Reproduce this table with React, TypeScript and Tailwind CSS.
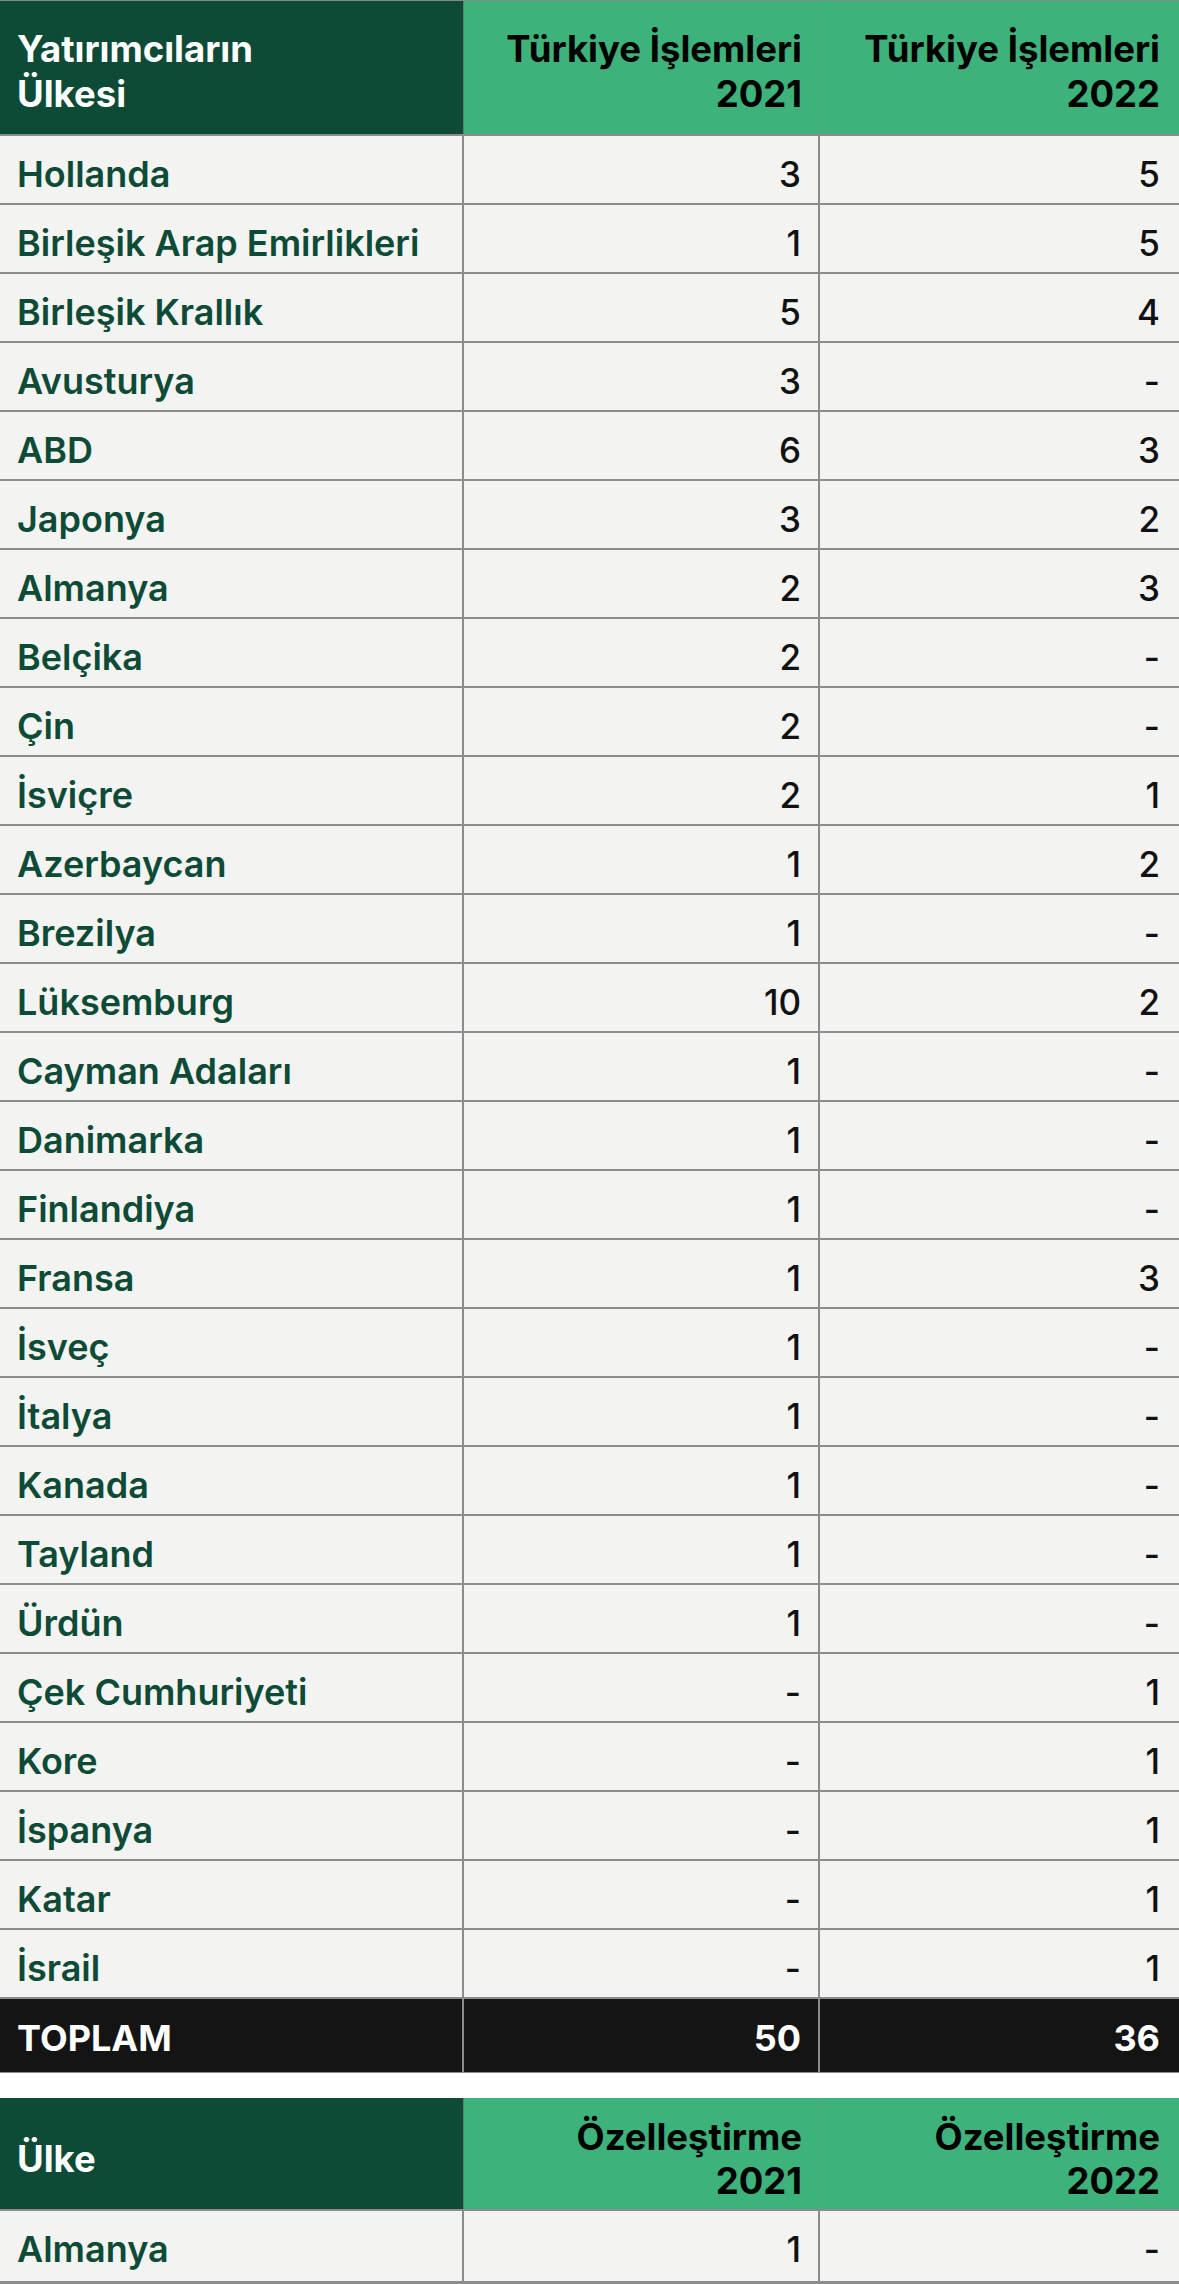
import React from 'react';

type Row = { country: string; y21: string; y22: string };

const rows: Row[] = [
  { country: 'Hollanda', y21: '3', y22: '5' },
  { country: 'Birleşik Arap Emirlikleri', y21: '1', y22: '5' },
  { country: 'Birleşik Krallık', y21: '5', y22: '4' },
  { country: 'Avusturya', y21: '3', y22: '-' },
  { country: 'ABD', y21: '6', y22: '3' },
  { country: 'Japonya', y21: '3', y22: '2' },
  { country: 'Almanya', y21: '2', y22: '3' },
  { country: 'Belçika', y21: '2', y22: '-' },
  { country: 'Çin', y21: '2', y22: '-' },
  { country: 'İsviçre', y21: '2', y22: '1' },
  { country: 'Azerbaycan', y21: '1', y22: '2' },
  { country: 'Brezilya', y21: '1', y22: '-' },
  { country: 'Lüksemburg', y21: '10', y22: '2' },
  { country: 'Cayman Adaları', y21: '1', y22: '-' },
  { country: 'Danimarka', y21: '1', y22: '-' },
  { country: 'Finlandiya', y21: '1', y22: '-' },
  { country: 'Fransa', y21: '1', y22: '3' },
  { country: 'İsveç', y21: '1', y22: '-' },
  { country: 'İtalya', y21: '1', y22: '-' },
  { country: 'Kanada', y21: '1', y22: '-' },
  { country: 'Tayland', y21: '1', y22: '-' },
  { country: 'Ürdün', y21: '1', y22: '-' },
  { country: 'Çek Cumhuriyeti', y21: '-', y22: '1' },
  { country: 'Kore', y21: '-', y22: '1' },
  { country: 'İspanya', y21: '-', y22: '1' },
  { country: 'Katar', y21: '-', y22: '1' },
  { country: 'İsrail', y21: '-', y22: '1' },
];

const grid = 'grid grid-cols-[464px_356px_1fr]';

const DataRow: React.FC<{ row: Row; last?: boolean }> = ({ row, last }) => (
  <div className={`${grid} bg-[#f3f3f1] border-[#8c8c8c] ${last ? 'h-[73px] border-b-[3px]' : 'h-[69px] border-b-2'}`}>
    <div className="border-r-2 border-[#8c8c8c] pl-[17px] pt-[18px] text-[36px] text-[#0d4b37] font-semibold">{row.country}</div>
    <div className="border-r-2 border-[#8c8c8c] pr-[17px] pt-[18px] text-right text-[#111111] font-medium">{row.y21}</div>
    <div className="pr-[19px] pt-[18px] text-right text-[#111111] font-medium">{row.y22}</div>
  </div>
);

export default function App() {
  return (
    <div className="w-[1179px] bg-white text-[35px] leading-[41px] font-['Inter','Liberation_Sans',sans-serif]">
      {/* yatırımcı ülkeleri */}
      <div className="border-t border-[#7d8c86]">
        <div className={`${grid} h-[135px] border-b-2 border-[#8c8c8c] font-bold text-[36.5px] leading-[45px]`}>
          <div className="bg-[#0d4b37] text-white pl-[17px] pt-[8px] flex items-center border-r border-[#5c7f71]">
            <span>Yatırımcıların<br />Ülkesi</span>
          </div>
          <div className="bg-[#3eb27b] text-black pr-[17px] pt-[8px] flex items-center justify-end text-right border-r border-[#52a97d]">
            <span>Türkiye İşlemleri<br />2021</span>
          </div>
          <div className="bg-[#3eb27b] text-black pr-[19px] pt-[8px] flex items-center justify-end text-right">
            <span>Türkiye İşlemleri<br />2022</span>
          </div>
        </div>
        {rows.map((r) => (
          <DataRow key={r.country} row={r} />
        ))}
        <div className={`${grid} h-[74px] bg-[#141414] border-b border-[#8c8c8c] text-white font-bold`}>
          <div className="border-r-2 border-[#8c8c8c] pl-[17px] pt-[19px] text-[36px]">TOPLAM</div>
          <div className="border-r-2 border-[#8c8c8c] pr-[17px] pt-[19px] text-right text-[36px]">50</div>
          <div className="pr-[19px] pt-[19px] text-right text-[36px]">36</div>
        </div>
      </div>

      {/* özelleştirme */}
      <div className="mt-[25px]">
        <div className={`${grid} h-[113px] border-b-2 border-[#8c8c8c] font-bold text-[36.5px] leading-[44px]`}>
          <div className="bg-[#0d4b37] text-white pl-[17px] pt-[10px] flex items-center border-r border-[#5c7f71]">
            <span>Ülke</span>
          </div>
          <div className="bg-[#3eb27b] text-black pr-[17px] pt-[10px] flex items-center justify-end text-right border-r border-[#52a97d]">
            <span>Özelleştirme<br />2021</span>
          </div>
          <div className="bg-[#3eb27b] text-black pr-[19px] pt-[10px] flex items-center justify-end text-right">
            <span>Özelleştirme<br />2022</span>
          </div>
        </div>
        <DataRow row={{ country: 'Almanya', y21: '1', y22: '-' }} last />
      </div>
    </div>
  );
}
